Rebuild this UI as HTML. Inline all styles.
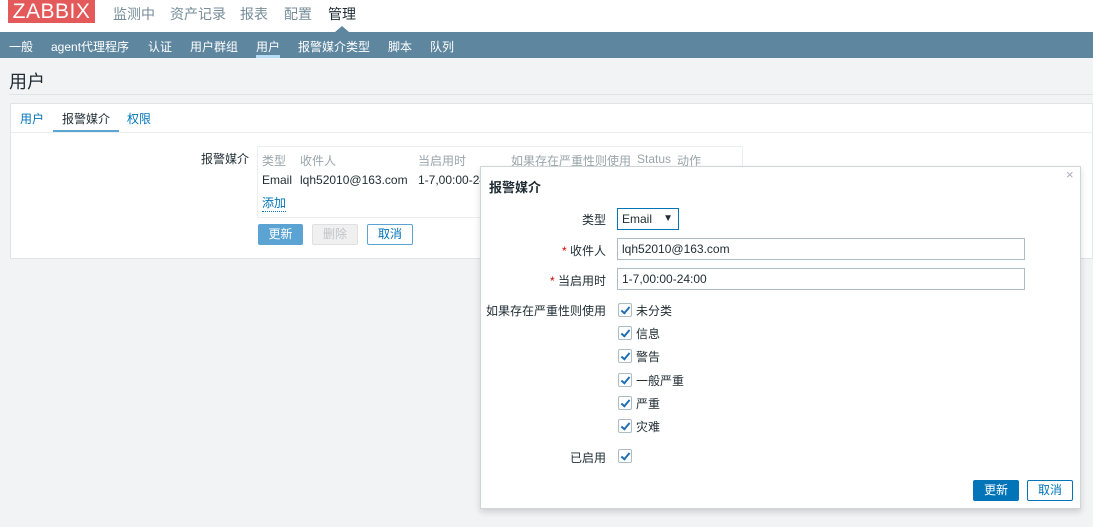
<!DOCTYPE html>
<html><head><meta charset="utf-8"><style>
*{box-sizing:border-box;margin:0;padding:0}
body{width:1093px;height:527px;overflow:hidden;background:#f2f3f5;font-family:"Liberation Sans","Noto Sans CJK SC",sans-serif;font-size:12px;color:#1f2c33;position:relative}
.abs{position:absolute;white-space:nowrap}
.top{position:absolute;left:0;top:0;width:1093px;height:32px;background:#fff}
.logo{position:absolute;left:8px;top:0px;width:87px;height:23px;background:#e45959;color:#fff;font-size:21px;line-height:23px;text-align:center;letter-spacing:0.5px}
.nav{position:absolute;left:0;top:32px;width:1093px;height:26px;background:#5e869f;color:#fff;font-size:12px}
.nav span{position:absolute;top:6px}
.panel{position:absolute;left:10px;top:103px;width:1083px;height:156px;background:#fff;border:1px solid #e1e4e6}
.btn{position:absolute;height:21px;line-height:19px;text-align:center;border-radius:2px;font-size:12px}
.dlg{position:absolute;left:480px;top:166px;width:601px;height:343px;background:#fff;border:1px solid #d0d5d8;box-shadow:0 3px 6px rgba(0,0,0,.15)}
.inp{position:absolute;height:22px;border:1px solid #acbbc4;padding-left:4px;line-height:20px;font-size:12px}
.cb{position:absolute;width:14px;height:14px;border:1px solid #acbbc4;border-radius:2px;background:#fff}
.cb:after{content:"";position:absolute;left:4px;top:1px;width:3px;height:7px;border:solid #1f6fb5;border-width:0 2px 2px 0;transform:rotate(40deg)}
.lbl{position:absolute;right:474px;text-align:right;white-space:nowrap}
.req{color:#d40000}
</style></head><body>
<div class="top">
<div class="logo">ZABBIX</div>
<span class="abs" style="left:113px;top:4px;font-size:14px;color:#768d99">监测中</span>
<span class="abs" style="left:170px;top:4px;font-size:14px;color:#768d99">资产记录</span>
<span class="abs" style="left:240px;top:4px;font-size:14px;color:#768d99">报表</span>
<span class="abs" style="left:284px;top:4px;font-size:14px;color:#768d99">配置</span>
<span class="abs" style="left:328px;top:4px;font-size:14px;color:#1f2c33">管理</span>
<div class="abs" style="left:335px;top:26px;width:0;height:0;border-left:7px solid transparent;border-right:7px solid transparent;border-bottom:6px solid #5e869f"></div>
</div>
<div class="nav">
<span style="left:9px">一般</span><span style="left:51px">agent代理程序</span><span style="left:148px">认证</span><span style="left:190px">用户群组</span><span style="left:256px">用户</span><span style="left:298px">报警媒介类型</span><span style="left:388px">脚本</span><span style="left:430px">队列</span>
<div class="abs" style="left:256px;top:23px;width:24px;height:3px;background:#b7dcf6"></div>
</div>
<span class="abs" style="left:9px;top:68px;font-size:18px;color:#1f2c33">用户</span>
<div class="abs" style="left:9px;top:94px;width:1084px;height:1px;background:#dfe4e7"></div>
<div class="panel">
<span class="abs" style="left:9px;top:6px;color:#0275b8">用户</span>
<span class="abs" style="left:51px;top:6px">报警媒介</span>
<div class="abs" style="left:42px;top:26px;width:66px;height:3px;background:#5da4d2"></div>
<span class="abs" style="left:116px;top:6px;color:#0275b8">权限</span>
<div class="abs" style="left:0;top:28px;width:1083px;height:1px;background:#ebeef0"></div>
<span class="abs" style="left:190px;top:46px">报警媒介</span>
<div class="abs" style="left:246px;top:42px;width:486px;height:72px;border:1px solid #ebeef0"></div>
<span class="abs" style="left:251px;top:48px;color:#9aa5ab">类型</span>
<span class="abs" style="left:289px;top:48px;color:#9aa5ab">收件人</span>
<span class="abs" style="left:407px;top:48px;color:#9aa5ab">当启用时</span>
<span class="abs" style="left:500px;top:48px;color:#9aa5ab">如果存在严重性则使用</span>
<span class="abs" style="left:626px;top:48px;color:#9aa5ab">Status</span>
<span class="abs" style="left:666px;top:48px;color:#9aa5ab">动作</span>
<span class="abs" style="left:251px;top:69px">Email</span>
<span class="abs" style="left:289px;top:69px">lqh52010@163.com</span>
<span class="abs" style="left:407px;top:69px">1-7,00:00-24:00</span>
<span class="abs" style="left:251px;top:90px;color:#0275b8;border-bottom:1px dotted #0275b8">添加</span>
<div class="btn" style="left:247px;top:120px;width:45px;background:#5ba3d2;color:#fff;border:1px solid #5ba3d2">更新</div>
<div class="btn" style="left:301px;top:120px;width:46px;background:#f0f0f0;color:#c0c5c8;border:1px solid #e0e0e0">删除</div>
<div class="btn" style="left:356px;top:120px;width:46px;background:#fff;color:#0275b8;border:1px solid #5ba3d2">取消</div>
</div>
<div class="dlg">
<span class="abs" style="left:8px;top:10px;font-size:13px;font-weight:bold;color:#1f2c33">报警媒介</span>
<span class="abs" style="left:585px;top:0px;color:#aab;font-size:13px">×</span>
<span class="lbl" style="top:44px">类型</span>
<div class="inp" style="left:136px;top:41px;width:62px;border-color:#0275b8">Email<span style="position:absolute;right:5px;top:0;font-size:10px">▼</span></div>
<span class="lbl" style="top:75px"><span class="req">*</span> 收件人</span>
<div class="inp" style="left:136px;top:71px;width:408px">lqh52010@163.com</div>
<span class="lbl" style="top:105px"><span class="req">*</span> 当启用时</span>
<div class="inp" style="left:136px;top:101px;width:408px">1-7,00:00-24:00</div>
<span class="lbl" style="top:135px">如果存在严重性则使用</span>
<div class="cb" style="left:137px;top:136px"></div><span class="abs" style="left:155px;top:135px">未分类</span>
<div class="cb" style="left:137px;top:159px"></div><span class="abs" style="left:155px;top:158px">信息</span>
<div class="cb" style="left:137px;top:182px"></div><span class="abs" style="left:155px;top:181px">警告</span>
<div class="cb" style="left:137px;top:206px"></div><span class="abs" style="left:155px;top:205px">一般严重</span>
<div class="cb" style="left:137px;top:229px"></div><span class="abs" style="left:155px;top:228px">严重</span>
<div class="cb" style="left:137px;top:252px"></div><span class="abs" style="left:155px;top:251px">灾难</span>
<span class="lbl" style="top:282px">已启用</span>
<div class="cb" style="left:137px;top:282px"></div>
<div class="btn" style="left:492px;top:313px;width:46px;background:#0275b8;color:#fff;border:1px solid #0275b8">更新</div>
<div class="btn" style="left:546px;top:313px;width:46px;background:#fff;color:#0275b8;border:1px solid #0275b8">取消</div>
</div>
</body></html>
